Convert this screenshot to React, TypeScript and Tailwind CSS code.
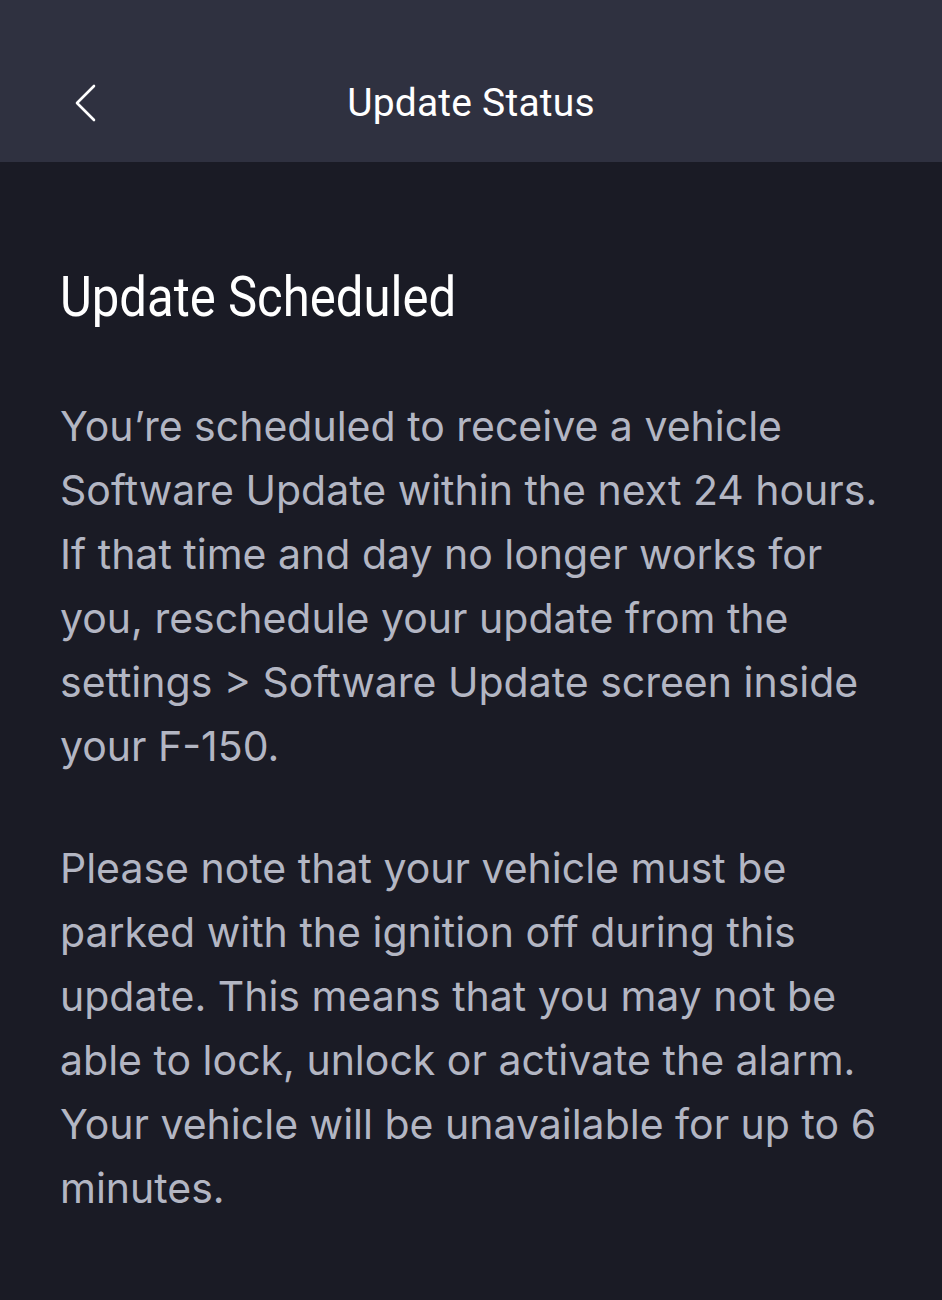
import React from "react";

const p1 = [
  "You’re scheduled to receive a vehicle",
  "Software Update within the next 24 hours.",
  "If that time and day no longer works for",
  "you, reschedule your update from the",
  "settings > Software Update screen inside",
  "your F-150.",
];
const p2 = [
  "Please note that your vehicle must be",
  "parked with the ignition off during this",
  "update. This means that you may not be",
  "able to lock, unlock or activate the alarm.",
  "Your vehicle will be unavailable for up to 6",
  "minutes.",
];

export default function App() {
  return (
    <div className="min-h-[1300px] w-[942px] bg-[#1a1b25] flex flex-col">
      <header className="h-[162px] bg-[#2f3140] pt-[44px] relative">
        <div className="h-[118px] flex items-center pl-[74px]">
          <svg width="24" height="40" viewBox="0 0 24 40" fill="none">
            <path d="M20 3 L3 20 L20 37" stroke="#ffffff" strokeWidth="2.6" strokeLinecap="round" strokeLinejoin="round" />
          </svg>
        </div>
        <div className="absolute inset-x-0 top-[44px] h-[118px] flex items-center justify-center pointer-events-none">
          <span className="text-white text-[39px] tracking-[0.2px]" style={{ fontFamily: 'Roboto, sans-serif' }}>
            Update Status
          </span>
        </div>
      </header>
      <main className="px-[60px] pt-[100px]">
        <h1 className="text-white text-[56px] leading-[70px] whitespace-nowrap inline-block origin-left scale-x-[0.876]" style={{ fontFamily: 'Roboto, sans-serif' }}>
          Update Scheduled
        </h1>
        <div className="mt-[62px] text-[#b3b6c3] text-[41px] leading-[64px] whitespace-nowrap" style={{ fontFamily: 'Inter, "Noto Sans", sans-serif' }}>
          <p>
            {p1.map((l, i) => (
              <React.Fragment key={i}>
                {l}
                {i < p1.length - 1 && <br />}
              </React.Fragment>
            ))}
          </p>
          <p className="mt-[58px]">
            {p2.map((l, i) => (
              <React.Fragment key={i}>
                {l}
                {i < p2.length - 1 && <br />}
              </React.Fragment>
            ))}
          </p>
        </div>
      </main>
    </div>
  );
}
